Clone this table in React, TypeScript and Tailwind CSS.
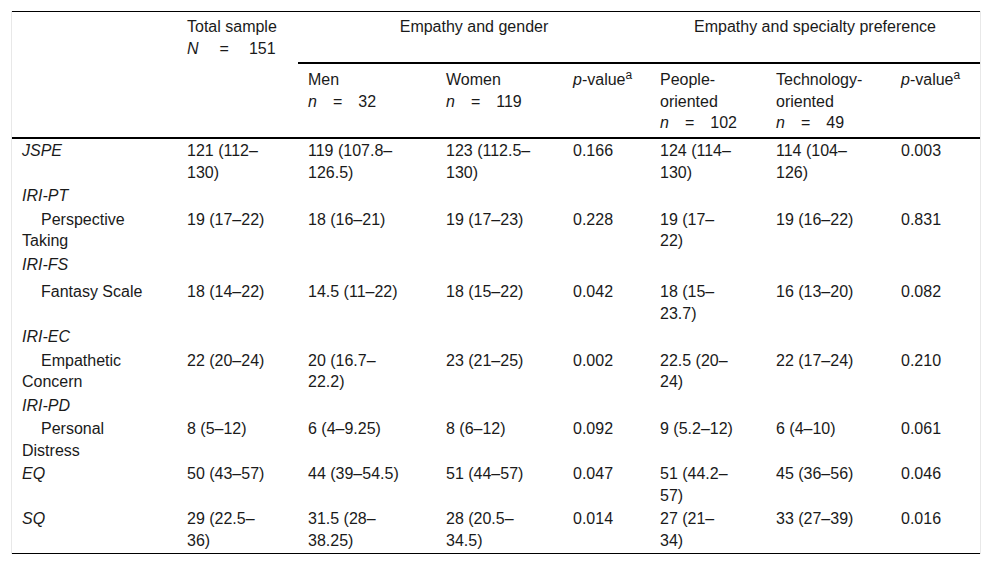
import React from 'react';

type Row = {
  label: string;
  italic?: boolean;
  indent?: boolean;
  spaced?: boolean;
  cells?: string[];
};

const rows: Row[] = [
  { label: 'JSPE', italic: true, cells: ['121 (112–\n130)', '119 (107.8–\n126.5)', '123 (112.5–\n130)', '0.166', '124 (114–\n130)', '114 (104–\n126)', '0.003'] },
  { label: 'IRI-PT', italic: true },
  { label: 'Perspective\nTaking', indent: true, cells: ['19 (17–22)', '18 (16–21)', '19 (17–23)', '0.228', '19 (17–\n22)', '19 (16–22)', '0.831'] },
  { label: 'IRI-FS', italic: true, spaced: true },
  { label: 'Fantasy Scale', indent: true, cells: ['18 (14–22)', '14.5 (11–22)', '18 (15–22)', '0.042', '18 (15–\n23.7)', '16 (13–20)', '0.082'] },
  { label: 'IRI-EC', italic: true },
  { label: 'Empathetic\nConcern', indent: true, cells: ['22 (20–24)', '20 (16.7–\n22.2)', '23 (21–25)', '0.002', '22.5 (20–\n24)', '22 (17–24)', '0.210'] },
  { label: 'IRI-PD', italic: true },
  { label: 'Personal\nDistress', indent: true, cells: ['8 (5–12)', '6 (4–9.25)', '8 (6–12)', '0.092', '9 (5.2–12)', '6 (4–10)', '0.061'] },
  { label: 'EQ', italic: true, cells: ['50 (43–57)', '44 (39–54.5)', '51 (44–57)', '0.047', '51 (44.2–\n57)', '45 (36–56)', '0.046'] },
  { label: 'SQ', italic: true, cells: ['29 (22.5–\n36)', '31.5 (28–\n38.25)', '28 (20.5–\n34.5)', '0.014', '27 (21–\n34)', '33 (27–39)', '0.016'] },
];

const PValue = () => (
  <>
    <i>p</i>-value<sup className="text-[12px]">a</sup>
  </>
);

const SmallN = ({ value }: { value: string }) => (
  <>
    <i>n</i>
    <span className="mx-[16px]">=</span>
    {value}
  </>
);

export default function App() {
  return (
    <div className="min-h-screen bg-white px-[11px] pt-[11px] font-['Liberation_Sans',Arial,sans-serif] text-[16px] leading-[21.5px] text-[#1a1a1a]">
      <div className="border-x border-[#e8e8e8]">
        <table className="w-full table-fixed border-separate border-spacing-0 border-y border-black">
          <colgroup>
            <col className="w-[165px]" />
            <col className="w-[121px]" />
            <col className="w-[138px]" />
            <col className="w-[127px]" />
            <col className="w-[87px]" />
            <col className="w-[116px]" />
            <col className="w-[125px]" />
            <col className="w-[89px]" />
          </colgroup>
          <thead>
            <tr>
              <th rowSpan={2} className="border-b-2 border-black pl-[10px] pt-[4px] text-left align-top font-normal"></th>
              <th rowSpan={2} className="border-b-2 border-black pl-[10px] pt-[4px] text-left align-top font-normal">
                Total sample
                <br />
                <i>N</i>
                <span className="ml-[21px] mr-[20px]">=</span>151
              </th>
              <th colSpan={3} className="border-b-2 border-black pt-[4px] pb-[24.5px] text-center align-top font-normal">
                Empathy and gender
              </th>
              <th colSpan={3} className="border-b-2 border-black pt-[4px] pb-[24.5px] text-center align-top font-normal">
                Empathy and specialty preference
              </th>
            </tr>
            <tr>
              <th className="border-b-2 border-black pl-[10px] pt-[5px] pb-[3.5px] text-left align-top font-normal">
                Men
                <br />
                <SmallN value="32" />
              </th>
              <th className="border-b-2 border-black pl-[10px] pt-[5px] pb-[3.5px] text-left align-top font-normal">
                Women
                <br />
                <SmallN value="119" />
              </th>
              <th className="border-b-2 border-black pl-[10px] pt-[5px] pb-[3.5px] text-left align-top font-normal">
                <PValue />
              </th>
              <th className="border-b-2 border-black pl-[10px] pt-[5px] pb-[3.5px] text-left align-top font-normal">
                People-
                <br />
                oriented
                <br />
                <SmallN value="102" />
              </th>
              <th className="border-b-2 border-black pl-[10px] pt-[5px] pb-[3.5px] text-left align-top font-normal">
                Technology-
                <br />
                oriented
                <br />
                <SmallN value="49" />
              </th>
              <th className="border-b-2 border-black pl-[10px] pt-[5px] pb-[3.5px] text-left align-top font-normal">
                <PValue />
              </th>
            </tr>
          </thead>
          <tbody>
            {rows.map((row) => {
              const pad = row.spaced ? 'pt-[1px] pb-[5px]' : 'py-[1px]';
              return (
                <tr key={row.label}>
                  <td
                    className={
                      'whitespace-pre-line pl-[10px] align-top ' +
                      pad +
                      (row.italic ? ' italic' : '') +
                      (row.indent ? ' indent-[19px]' : '')
                    }
                  >
                    {row.label}
                  </td>
                  {Array.from({ length: 7 }).map((_, i) => (
                    <td key={i} className={'whitespace-pre-line pl-[10px] align-top ' + pad}>
                      {row.cells ? row.cells[i] : ''}
                    </td>
                  ))}
                </tr>
              );
            })}
            <tr>
              <td colSpan={8} className="h-[1px]"></td>
            </tr>
          </tbody>
        </table>
      </div>
    </div>
  );
}
